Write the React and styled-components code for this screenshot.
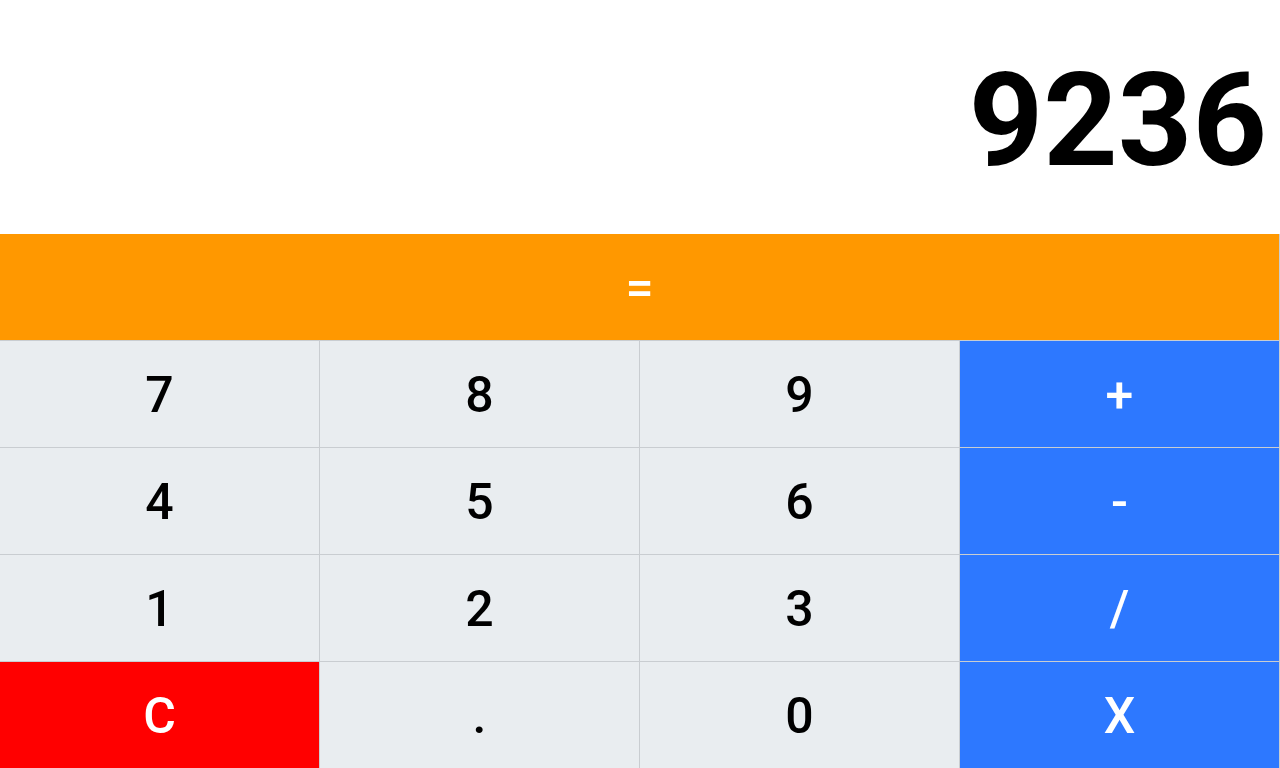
import styled, { createGlobalStyle } from "styled-components";

const GlobalStyle = createGlobalStyle`
  html, body {
    margin: 0;
    padding: 0;
  }
  body {
    font-family: Roboto, "Liberation Sans", sans-serif;
    background: #ffffff;
  }
`;

const Calculator = styled.main`
  display: flex;
  flex-direction: column;
  height: 100vh;
  width: 100%;
`;

const Screen = styled.div`
  height: 234px;
  display: flex;
  align-items: center;
  justify-content: flex-end;
  padding: 8px 13px 0 0;
  box-sizing: border-box;
  font-size: 130px;
  font-weight: 700;
  color: #000;
  line-height: 1;
`;

const Keys = styled.section`
  flex: 1;
  display: grid;
  grid-template-columns: repeat(4, 1fr);
  grid-template-rows: repeat(5, 1fr);
  gap: 1px;
  padding-right: 1px;
  background: #c9cdd1;
`;

const colors = {
  num: { bg: "#e9edf0", fg: "#000" },
  op: { bg: "#2d78ff", fg: "#fff" },
  equals: { bg: "#ff9800", fg: "#fff" },
  clear: { bg: "#ff0000", fg: "#fff" },
};

const Key = styled.button`
  grid-column: ${(p) => (p.$wide ? "1 / -1" : "auto")};
  border: none;
  margin: 0;
  padding: 2px 0 0;
  display: flex;
  align-items: center;
  justify-content: center;
  font-family: Roboto, "Liberation Sans", sans-serif;
  font-size: 50px;
  font-weight: 500;
  background: ${(p) => colors[p.$kind].bg};
  color: ${(p) => colors[p.$kind].fg};
  cursor: pointer;
`;

const rows = [
  ["7", "8", "9", { label: "+", kind: "op" }],
  ["4", "5", "6", { label: "-", kind: "op" }],
  ["1", "2", "3", { label: "/", kind: "op" }],
  [{ label: "C", kind: "clear" }, ".", "0", { label: "X", kind: "op" }],
];

const App = () => {
  return (
    <>
      <GlobalStyle />
      <Calculator>
        <Screen>9236</Screen>
        <Keys>
          <Key $kind="equals" $wide>
            =
          </Key>
          {rows.flat().map((k, i) => {
            const key = typeof k === "string" ? { label: k, kind: "num" } : k;
            return (
              <Key key={i} $kind={key.kind}>
                {key.label}
              </Key>
            );
          })}
        </Keys>
      </Calculator>
    </>
  );
};

export default App;
